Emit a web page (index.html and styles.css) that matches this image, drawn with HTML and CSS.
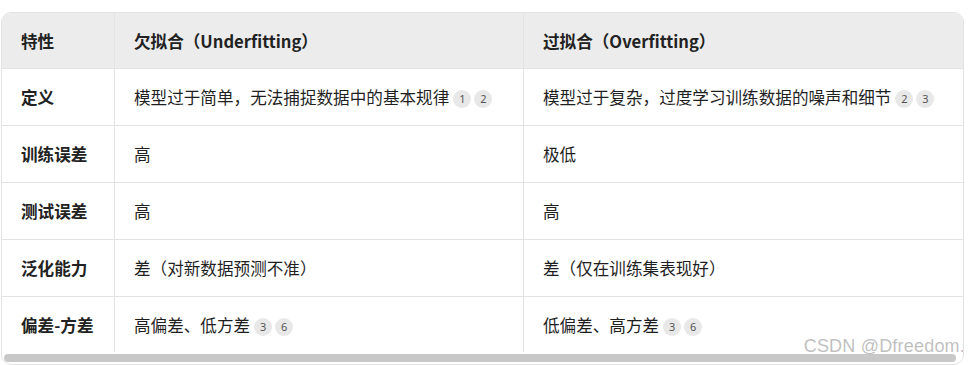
FILE: index.html
```html
<!DOCTYPE html>
<html lang="zh">
<head>
<meta charset="utf-8">
<link rel="stylesheet" href="styles.css">
</head>
<body>
<div class="frame">
  <div class="scroller">
    <table class="cmp">
      <thead>
        <tr><th class="c1">特性</th><th class="c2">欠拟合（Underfitting）</th><th class="c3">过拟合（Overfitting）</th></tr>
      </thead>
      <tbody>
        <tr><td class="key">定义</td><td>模型过于简单，无法捕捉数据中的基本规律<span class="ref">1</span><span class="ref">2</span></td><td>模型过于复杂，过度学习训练数据的噪声和细节<span class="ref">2</span><span class="ref">3</span></td></tr>
        <tr><td class="key">训练误差</td><td>高</td><td>极低</td></tr>
        <tr><td class="key">测试误差</td><td>高</td><td>高</td></tr>
        <tr><td class="key">泛化能力</td><td>差（对新数据预测不准）</td><td>差（仅在训练集表现好）</td></tr>
        <tr><td class="key">偏差-方差</td><td>高偏差、低方差<span class="ref">3</span><span class="ref">6</span></td><td>低偏差、高方差<span class="ref">3</span><span class="ref">6</span></td></tr>
      </tbody>
    </table>
  </div>
  <div class="track"><div class="thumb"></div></div>
  <div class="mark">CSDN @Dfreedom.</div>
</div>
</body>
</html>
```
FILE: styles.css
```css
html, body {
  margin: 0;
  padding: 0;
  background: #ffffff;
}
body {
  font-family: "Noto Sans CJK SC", "Noto Sans", sans-serif;
  color: #1f1f1f;
}
.frame {
  position: relative;
  margin: 12px 0 0 1px;
  width: 961px;
  height: 351px;
  border: 1px solid #e3e3e3;
  border-radius: 10px;
  overflow: hidden;
}
.scroller {
  height: 339px;
  overflow: hidden;
}
.cmp {
  border-collapse: collapse;
  table-layout: fixed;
  width: 961px;
  font-size: 16.6px;
}
.cmp th, .cmp td {
  padding: 0 0 0 19px;
  text-align: left;
  white-space: nowrap;
  border-right: 1px solid #e3e3e3;
  border-bottom: 1px solid #e3e3e3;
}
.cmp th:last-child, .cmp td:last-child {
  border-right: none;
}
.cmp th {
  height: 55px;
  background: #ececec;
  font-weight: 700;
  color: #222;
}
.cmp td {
  height: 56px;
}
.cmp .c1 { width: 93px; }
.cmp .c2 { width: 389px; }
.cmp td.key {
  font-weight: 700;
  color: #222;
}
.ref {
  display: inline-flex;
  align-items: center;
  justify-content: center;
  width: 18px;
  height: 18px;
  margin-left: 3px;
  border-radius: 50%;
  background: #e8e8e8;
  color: #555;
  font-family: "Noto Sans", sans-serif;
  font-size: 11px;
  vertical-align: 1px;
}
.ref:first-of-type { margin-left: 4px; }
.track {
  padding: 2px 7px 0 2px;
}
.thumb {
  height: 8px;
  border-radius: 4px;
  background: #c8c8c8;
}
.mark {
  position: absolute;
  right: -2px;
  top: 323px;
  font-family: "Liberation Sans", Arial, sans-serif;
  font-size: 18px;
  color: rgba(170, 170, 170, 0.75);
  letter-spacing: 0.2px;
}
```
